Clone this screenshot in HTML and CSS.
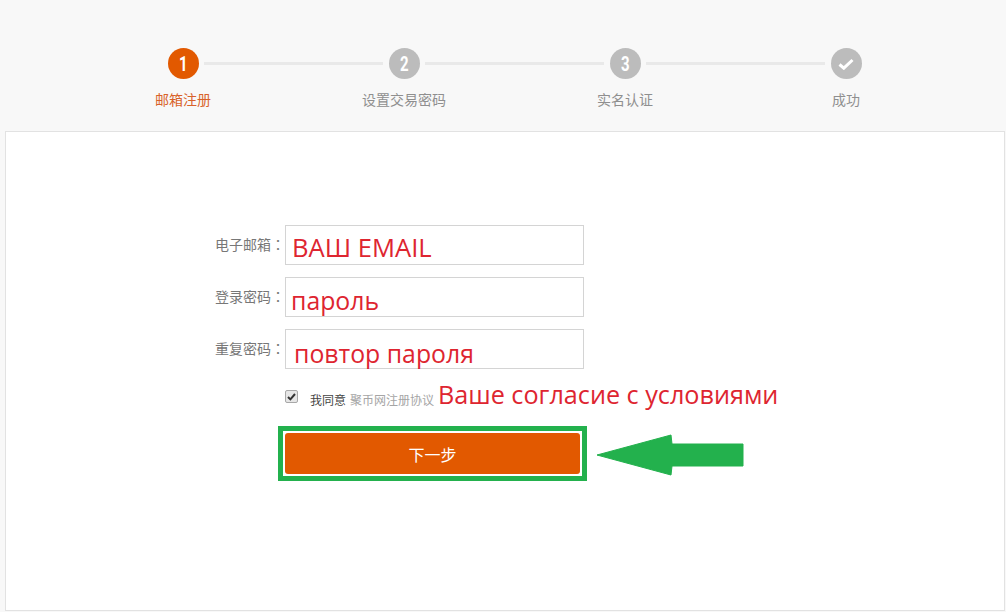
FILE: index.html
```html
<!DOCTYPE html>
<html lang="en">
<head>
    <meta charset="UTF-8">
    <title>Регистрация</title>
    <link rel="stylesheet" href="styles.css">
</head>
<body>

<div class="steps">
    <div class="step active">
        <span class="step-num"><span class="digit">1</span></span>
        <span class="step-name">邮箱注册</span>
    </div>
    <div class="step-line"></div>
    <div class="step">
        <span class="step-num"><span class="digit">2</span></span>
        <span class="step-name">设置交易密码</span>
    </div>
    <div class="step-line"></div>
    <div class="step">
        <span class="step-num"><span class="digit">3</span></span>
        <span class="step-name">实名认证</span>
    </div>
    <div class="step-line"></div>
    <div class="step">
        <span class="step-num">
            <svg width="16" height="12" viewBox="0 0 16 12"><path d="M1.5 6.5 L5.8 10.2 L14.5 2" fill="none" stroke="#fff" stroke-width="3"/></svg>
        </span>
        <span class="step-name">成功</span>
    </div>
</div>

<div class="card">
    <form class="form">
        <div class="row">
            <label class="row-label">电子邮箱：</label>
            <div class="field"><span class="hint hint-email">ВАШ EMAIL</span></div>
        </div>
        <div class="row">
            <label class="row-label">登录密码：</label>
            <div class="field"><span class="hint hint-pass">пароль</span></div>
        </div>
        <div class="row">
            <label class="row-label">重复密码：</label>
            <div class="field"><span class="hint hint-repeat">повтор пароля</span></div>
        </div>
        <div class="agree">
            <span class="agree-box">
                <svg width="9" height="8" viewBox="0 0 9 8"><path d="M1 4 L3.4 6.4 L8 1" fill="none" stroke="#333" stroke-width="2"/></svg>
            </span>
            <span class="agree-text">我同意</span>
            <a class="agree-link">聚币网注册协议</a>
            <span class="agree-note">Ваше согласие с условиями</span>
        </div>
        <div class="submit-wrap">
            <button type="button" class="submit">下一步</button>
            <svg class="arrow" width="150" height="42" viewBox="0 0 150 42">
                <path d="M1 21 L75 1 L76 10 L147 10 L147 32 L76 32 L75 41 Z" fill="#23b14d" stroke="#23b14d" stroke-width="1" stroke-linejoin="round"/>
            </svg>
        </div>
    </form>
</div>

</body>
</html>
```

FILE: styles.css
```css
* {
    box-sizing: border-box;
}

body {
    margin: 0;
    height: 612px;
    overflow: hidden;
    background-color: #f8f8f8;
    font-family: "Liberation Sans", "Noto Sans CJK SC", sans-serif;
    font-size: 14px;
    color: #777;
}

.steps {
    height: 131px;
    padding: 48px 132px 0 155px;
    display: flex;
    align-items: flex-start;
}

.step {
    width: 56px;
    display: flex;
    flex-direction: column;
    align-items: center;
    flex-shrink: 0;
}

.step-num {
    width: 31px;
    height: 31px;
    border-radius: 50%;
    background-color: #bcbcbc;
    color: #fff;
    font-family: "Roboto", sans-serif;
    font-size: 20px;
    font-weight: 700;
    display: flex;
    align-items: center;
    justify-content: center;
}

.digit {
    display: block;
    transform: translateX(0.5px) scaleX(0.75);
}

.step-name {
    margin-top: 12px;
    white-space: nowrap;
    font-size: 14px;
    line-height: 18px;
    color: #8f8f8f;
}

.active .step-num {
    background-color: #e25900;
}

.active .step-name {
    color: #d8622a;
}

.step-line {
    flex: 1;
    height: 3px;
    margin: 14px -7px 0;
    background-color: #e9e9e9;
}

.card {
    height: 480px;
    margin: 0 1px 0 5px;
    background-color: #fff;
    border: 1px solid #e2e2e2;
    padding-top: 93px;
}

.form {
    padding-left: 208px;
}

.row {
    display: flex;
    align-items: center;
    height: 40px;
    margin-bottom: 12px;
}

.row-label {
    width: 71px;
    text-align: right;
    white-space: nowrap;
    color: #777;
    font-family: "Liberation Sans", "Noto Sans CJK TC", sans-serif;
    margin-top: -3px;
}

.field {
    width: 299px;
    height: 40px;
    border: 1px solid #d4d4d4;
    background-color: #fff;
    position: relative;
}

.hint {
    position: absolute;
    color: #de2530;
    font-family: "Open Sans", sans-serif;
    font-size: 24.8px;
    line-height: 30px;
    white-space: nowrap;
}

.hint-email {
    left: 6px;
    top: 7px;
    font-size: 25.6px;
}

.hint-pass {
    left: 5px;
    top: 7px;
}

.hint-repeat {
    left: 8px;
    top: 8px;
}

.agree {
    margin: 17px 0 0 71px;
    height: 24px;
    display: flex;
    align-items: center;
    position: relative;
    font-size: 12px;
}

.agree-box {
    width: 13px;
    height: 13px;
    margin: -3px 12px 0 0;
    border: 1px solid #a8a8a8;
    border-radius: 2px;
    background-color: #e6e6e6;
    display: flex;
    align-items: center;
    justify-content: center;
}

.agree-text {
    color: #444;
    margin: 3px 4px 0 0;
}

.agree-link {
    color: #a5a5a5;
    margin-top: 3px;
}

.agree-note {
    position: absolute;
    left: 153px;
    top: -7px;
    color: #de2530;
    font-family: "Open Sans", sans-serif;
    font-size: 25.2px;
    line-height: 30px;
    white-space: nowrap;
}

.submit-wrap {
    margin: 16px 0 0 64px;
    position: relative;
    width: 309px;
    height: 55px;
    border: 5px solid #23b14d;
    padding: 2px;
    background-color: #fff;
}

.submit {
    display: block;
    width: 100%;
    height: 100%;
    border: none;
    padding: 0;
    border-radius: 3px;
    background-color: #e25900;
    color: #fff;
    font-family: "Liberation Sans", "Noto Sans CJK SC", sans-serif;
    font-size: 16px;
    cursor: pointer;
}

.arrow {
    position: absolute;
    left: 313px;
    top: 3px;
}
```
